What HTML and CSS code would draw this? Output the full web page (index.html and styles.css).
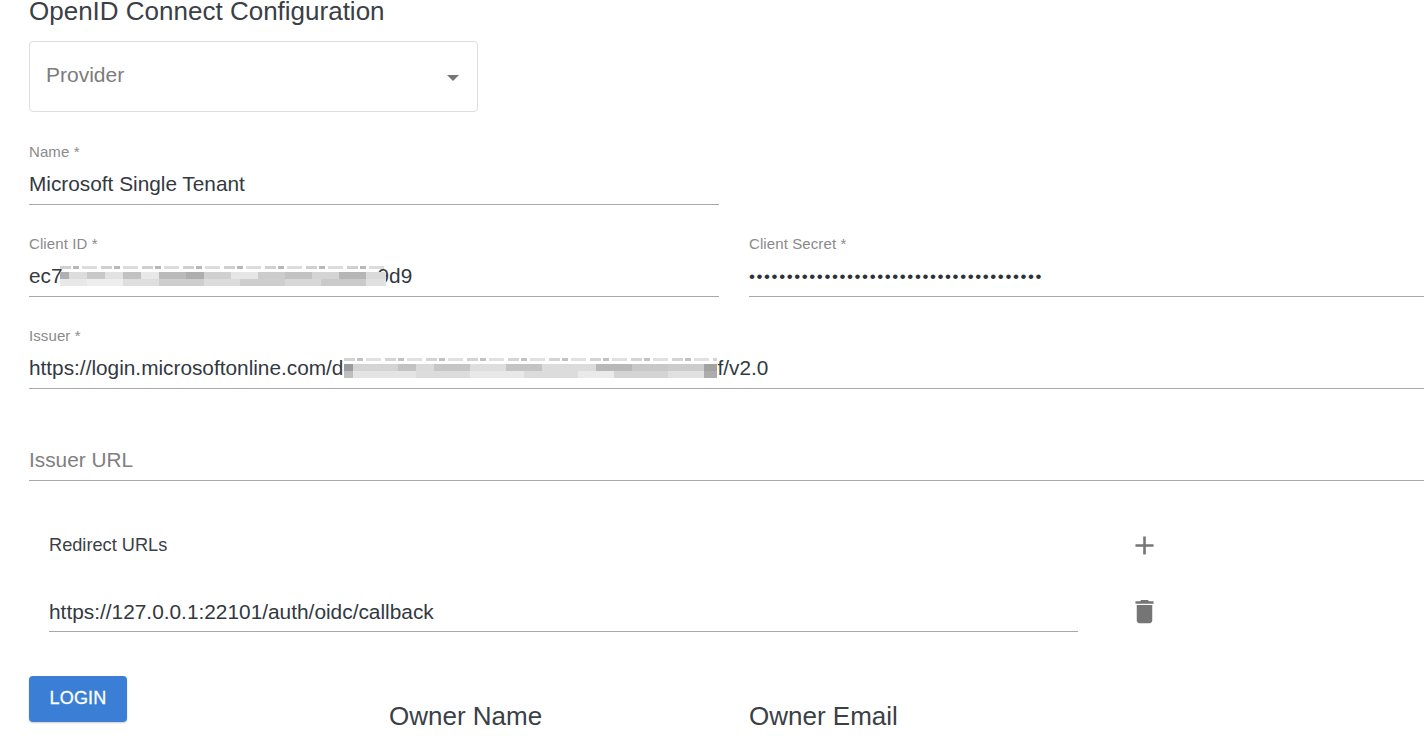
FILE: index.html
```html
<!DOCTYPE html>
<html lang="en">
<head>
<meta charset="utf-8">
<title>OpenID Connect Configuration</title>
<link rel="stylesheet" href="styles.css">
</head>
<body>
<main class="page">
  <h1 class="title">OpenID Connect Configuration</h1>
  <div class="select">
    <span class="select-label">Provider</span>
    <svg class="select-arrow" viewBox="0 0 12 6" width="12" height="6"><path d="M0 0h12L6 6z"/></svg>
  </div>
  <div class="row first-row">
    <div class="field half">
      <label class="label">Name *</label>
      <div class="value">Microsoft Single Tenant</div>
    </div>
  </div>
  <div class="row">
    <div class="field half">
      <label class="label">Client ID *</label>
      <div class="value">ec7<span class="mosaic mosaic-client"></span>9d9</div>
    </div>
    <div class="field grow">
      <label class="label">Client Secret *</label>
      <div class="value secret">•••••••••••••••••••••••••••••••••••••••</div>
    </div>
  </div>
  <div class="row">
    <div class="field grow">
      <label class="label">Issuer *</label>
      <div class="value">https://login.microsoftonline.com/d<span class="mosaic mosaic-issuer"></span>f/v2.0</div>
    </div>
  </div>
  <div class="row">
    <div class="field grow">
      <label class="label empty">&nbsp;</label>
      <div class="value placeholder">Issuer URL</div>
    </div>
  </div>
  <section class="redirects">
    <div class="redirect-head">
      <span class="redirect-title">Redirect URLs</span>
      <svg class="icon" viewBox="0 0 24 24"><path d="M19 13h-6v6h-2v-6H5v-2h6V5h2v6h6v2z"/></svg>
    </div>
    <div class="redirect-item">
      <div class="redirect-value">https://127.0.0.1:22101/auth/oidc/callback</div>
      <svg class="icon" viewBox="0 0 24 24"><path d="M6 19c0 1.1.9 2 2 2h8c1.1 0 2-.9 2-2V7H6v12zM19 4h-3.500l-1-1h-5l-1 1H5v2h14V4z"/></svg>
    </div>
  </section>
  <div class="footer">
    <button class="login" type="button">LOGIN</button>
    <span class="owner owner-name">Owner Name</span>
    <span class="owner owner-email">Owner Email</span>
  </div>
</main>
</body>
</html>
```
FILE: styles.css
```css
* { box-sizing: border-box; }
html, body { margin: 0; height: 100%; background: #fff; overflow: hidden; }
body { font-family: "Liberation Sans", Arial, sans-serif; color: #333a40; }
.page { width: 1424px; height: 742px; overflow: hidden; padding-left: 29px; }
.title { margin: 0; height: 41px; font-size: 26px; font-weight: 400; line-height: 23px; color: #3a4046; }
.select { width: 449px; height: 71px; border: 1px solid #dedede; border-radius: 4px; display: flex; align-items: center; justify-content: space-between; padding: 0 18px 4px 16px; }
.select-label { font-size: 21px; color: #7c7c7c; }
.select-arrow { fill: #757575; margin-top: 6px; }
.row { display: flex; gap: 30px; height: 92px; }
.first-row { margin-top: 31px; }
.field { height: 62px; border-bottom: 1px solid #a8a8a8; display: flex; flex-direction: column; }
.half { width: 690px; flex: none; }
.grow { flex: 1; }
.label { font-size: 15px; line-height: 18px; letter-spacing: 0.1px; color: #8a8a8a; }
.value { display: flex; align-items: center; height: 44px; padding-top: 2px; font-size: 20.8px; color: #33393f; white-space: nowrap; }
.secret { font-size: 17px; letter-spacing: 1.59px; padding-top: 4px; color: #2c3238; }
.placeholder { color: #808080; }
.mosaic { display: block; flex: none; height: 21px; background-repeat: no-repeat; filter: blur(0.5px); position: relative; }
.mosaic-client {
  width: 326px;
  margin-left: -3px;
  margin-right: -8px;
  background-image:
    repeating-linear-gradient(90deg, #d0d0d0 0 11px, #fff 11px 13px, #b8b8b8 13px 19px, #fff 19px 22px, #dcdcdc 22px 37px, #fff 37px 41px),
    linear-gradient(90deg, #b0b0b0 0 9px, #dcdcdc 9px 27px, #c8c8c8 27px 45px, #e2e2e2 45px 63px, #c2c2c2 63px 81px, #e8e8e8 81px 99px, #bababa 99px 126px, #aeaeae 126px 144px, #d0d0d0 144px 171px, #e6e6e6 171px 198px, #cccccc 198px 225px, #c2c2c2 225px 252px, #d4d4d4 252px 279px, #b6b6b6 279px 306px, #dadada 306px 326px),
    linear-gradient(90deg, #e8e8e8 0 27px, #eeeeee 27px 63px, #dedede 63px 99px, #cecece 99px 144px, #dcdcdc 144px 180px, #cecece 180px 225px, #d8d8d8 225px 261px, #cacaca 261px 306px, #e0e0e0 306px 326px);
  background-size: 100% 3px, 100% 7px, 100% 7px;
  background-position: 0 1px, 0 7px, 0 14px;
}
.mosaic-issuer {
  width: 373px;
  margin-left: 1px;
  background-image:
    repeating-linear-gradient(90deg, #d4d4d4 0 11px, #fff 11px 13px, #c2c2c2 13px 19px, #fff 19px 22px, #e0e0e0 22px 37px, #fff 37px 41px),
    linear-gradient(90deg, #9c9c9c 0 9px, #d4d4d4 9px 54px, #c2c2c2 54px 72px, #dadada 72px 90px, #c6c6c6 90px 126px, #dedede 126px 162px, #c4c4c4 162px 198px, #dcdcdc 198px 252px, #b8b8b8 252px 288px, #c8c8c8 288px 324px, #cccccc 324px 360px, #a2a2a2 360px 373px),
    linear-gradient(90deg, #bebebe 0 9px, #e4e4e4 9px 72px, #dcdcdc 72px 126px, #e8e8e8 126px 180px, #dcdcdc 180px 234px, #eaeaea 234px 270px, #d4d4d4 270px 324px, #e0e0e0 324px 360px, #acacac 360px 373px);
  background-size: 100% 3px, 100% 7px, 100% 7px;
  background-position: 0 1px, 0 7px, 0 14px;
}
.redirects { padding: 17px 0 0 20px; width: 1130.5px; }
.redirect-head { display: flex; align-items: center; justify-content: space-between; height: 34px; }
.redirect-title { font-size: 18.2px; color: #3a4046; }
.icon { fill: #757575; flex: none; width: 31px; height: 31px; }
.redirect-item { display: flex; align-items: center; justify-content: space-between; margin-top: 29px; }
.redirect-value { width: 1029px; height: 41px; padding-top: 9px; border-bottom: 1px solid #a8a8a8; font-size: 20.85px; color: #33393f; line-height: 24px; }
.footer { display: flex; align-items: flex-start; margin-top: 44px; }
.login { width: 98px; height: 46px; flex: none; border: 0; border-radius: 4px; background: #3a7fd5; color: #fff; font: 400 18px "Liberation Sans", Arial, sans-serif; letter-spacing: 0.2px; -webkit-text-stroke: 0.3px #fff; padding: 0 0 1px; box-shadow: 0 1px 2px rgba(0,0,0,.2); }
.owner { font-size: 26px; line-height: 28px; margin-top: 26px; color: #3a4046; }
.owner-name { margin-left: 262px; width: 360px; }
```
